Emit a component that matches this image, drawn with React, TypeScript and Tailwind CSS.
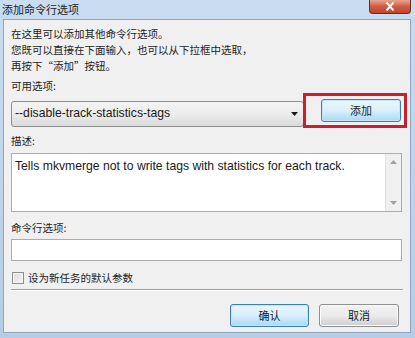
import React from 'react';

const cjk = { fontFamily: '"Noto Sans CJK SC", "Noto Sans", sans-serif' };
const latin = { fontFamily: '"Liberation Sans", "Noto Sans CJK SC", sans-serif' };

const WinButton: React.FC<{ label: string; focused?: boolean; className?: string }> = ({ label, focused, className }) => (
  <button
    className={`h-[23px] rounded-[3px] border text-[11px] text-[#1a1a1a] shrink-0 ${
      focused
        ? 'border-[#3c7fb1] bg-gradient-to-b from-[#eaf6fd] via-[#d9f0fc] to-[#a7d9f5] shadow-[inset_0_0_0_1px_#c4e5f6]'
        : 'border-[#8e8f8f] bg-gradient-to-b from-[#f2f2f2] via-[#ebebeb] to-[#cfcfcf] shadow-[inset_0_0_0_1px_#fcfcfc]'
    } ${className ?? ''}`}
    style={cjk}
  >
    {label}
  </button>
);

export default function App() {
  return (
    <div className="w-[415px] h-[338px] bg-gradient-to-b from-[#c9dcf0] to-[#b7cde5] flex flex-col overflow-hidden" style={cjk}>
      {/* title bar */}
      <div className="h-[19px] flex items-start justify-between shrink-0">
        <span className="pl-[2px] pt-[1px] text-[11px] leading-[16px] text-[#1e1e1e]">添加命令行选项</span>
        <div className="mr-[4px] w-[42px] h-[14px] rounded-b-[4px] border border-t-0 border-[#6d2a22] bg-gradient-to-b from-[#e8a493] via-[#cf5a44] to-[#c0452d] flex items-center justify-center">
          <svg width="10" height="9" viewBox="0 0 10 9">
            <path d="M1.5 0.5 L8.5 8.5 M8.5 0.5 L1.5 8.5" stroke="#ffffff" strokeWidth="2" />
          </svg>
        </div>
      </div>

      {/* client area */}
      <div className="flex-1 ml-[3px] mr-[4px] mb-[5px] bg-[#f0f0f0] border border-[#8ea6c0] flex flex-col pl-[7px] pt-[6px]">
        <div className="text-[10.5px] leading-[16px] text-[#1e1e1e]">
          <p>在这里可以添加其他命令行选项。</p>
          <p>您既可以直接在下面输入，也可以从下拉框中选取，</p>
          <p>再按下“添加”按钮。</p>
        </div>

        <p className="mt-[4px] text-[10.5px] leading-[16px] text-[#1e1e1e]">可用选项:</p>
        <div className="flex items-center mt-[-1px]">
          <div className="shrink-0 h-[26px] w-[293px] rounded-[3px] border border-[#8e8f8f] bg-gradient-to-b from-[#f4f4f4] via-[#ececec] to-[#dadada] flex items-center pl-[3px] pr-[5px] mt-[6px]">
            <span className="flex-1 text-[12.2px] text-[#1a1a1a]" style={latin}>--disable-track-statistics-tags</span>
            <svg width="7" height="4" viewBox="0 0 7 4">
              <path d="M0 0 H7 L3.5 4 Z" fill="#1a1a1a" />
            </svg>
          </div>
          <div className="shrink-0 ml-[-1px] w-[104px] h-[35px] border-[3px] border-[#c8202c] flex items-center justify-end pr-[3px]">
            <WinButton label="添加" focused className="w-[80px]" />
          </div>
        </div>

        <p className="mt-[5px] text-[10.5px] leading-[16px] text-[#1e1e1e]">描述:</p>
        <div className="mt-[4px] w-[391px] h-[59px] border border-[#abadb3] bg-white flex">
          <p className="flex-1 pl-[3px] pt-[4px] text-[12.2px] leading-[16px] text-[#1a1a1a]" style={latin}>
            Tells mkvmerge not to write tags with statistics for each track.
          </p>
          <div className="w-[16px] h-full bg-[#f0f0f0] border-l border-[#e3e3e3] flex flex-col items-center justify-between py-[6px]">
            <svg width="7" height="4" viewBox="0 0 7 4">
              <path d="M0 4 H7 L3.5 0 Z" fill="#a0a0a0" />
            </svg>
            <svg width="7" height="4" viewBox="0 0 7 4">
              <path d="M0 0 H7 L3.5 4 Z" fill="#a0a0a0" />
            </svg>
          </div>
        </div>

        <p className="mt-[8px] text-[10.5px] leading-[16px] text-[#1e1e1e]">命令行选项:</p>
        <div className="mt-[3px] w-[391px] h-[22px] border border-[#abadb3] bg-white" />

        <label className="mt-[9px] flex items-center gap-[4px] text-[10.5px] leading-[16px] text-[#1e1e1e]">
          <span className="ml-[1px] w-[12px] h-[12px] border border-[#8f8f8f] bg-gradient-to-br from-[#dcdcdc] to-[#f7f7f7] shadow-[inset_0_0_0_1px_#f4f4f4]" />
          设为新任务的默认参数
        </label>

        <div className="mt-[3px] w-[392px] border-t border-[#a0a0a0] border-b border-b-white" />

        <div className="flex gap-[10px] pl-[219px] mt-[13px]">
          <WinButton label="确认" focused className="w-[79px]" />
          <WinButton label="取消" className="w-[80px]" />
        </div>
      </div>
    </div>
  );
}
